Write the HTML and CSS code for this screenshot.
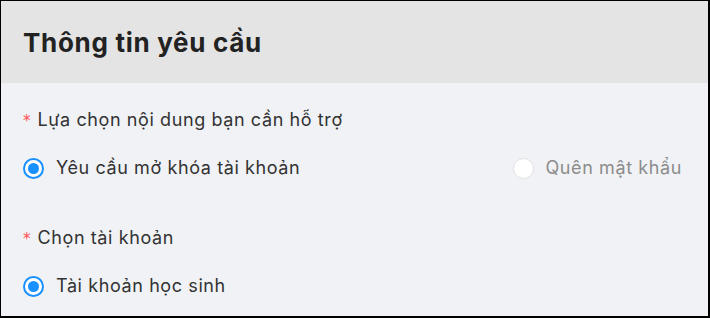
FILE: index.html
```html
<!DOCTYPE html>
<html lang="vi">
<head>
<meta charset="utf-8">
<link rel="stylesheet" href="styles.css">
</head>
<body>
<div class="frame">
  <div class="card-head">
    <h1 class="title">Thông tin yêu cầu</h1>
  </div>
  <div class="card-body">
    <div class="field">
      <div class="label"><span class="req">*</span>Lựa chọn nội dung bạn cần hỗ trợ</div>
      <div class="options split">
        <label class="radio checked"><span class="dot"></span><span class="rtext">Yêu cầu mở khóa tài khoản</span></label>
        <label class="radio disabled"><span class="dot"></span><span class="rtext">Quên mật khẩu</span></label>
      </div>
    </div>
    <div class="field">
      <div class="label"><span class="req">*</span>Chọn tài khoản</div>
      <div class="options">
        <label class="radio checked"><span class="dot"></span><span class="rtext">Tài khoản học sinh</span></label>
      </div>
    </div>
  </div>
</div>
</body>
</html>
```
FILE: styles.css
```css
* { box-sizing: border-box; }
html, body { margin: 0; padding: 0; }
body {
  width: 710px;
  height: 318px;
  overflow: hidden;
  font-family: Inter, "Noto Sans", sans-serif;
  background: #000;
}
.frame {
  width: 710px;
  height: 318px;
  border-style: solid;
  border-color: #000;
  border-width: 1px 2px 2px 1px;
  background: #f0f2f5;
  display: flex;
  flex-direction: column;
}
.card-head {
  height: 82px;
  background: #e4e4e4;
  display: flex;
  align-items: center;
  padding: 0 22px;
}
.title {
  margin: 0;
  font-size: 26px;
  font-weight: 700;
  color: #222;
  letter-spacing: 0.7px;
}
.card-body {
  padding: 24px 26px 0 22px;
  display: flex;
  flex-direction: column;
  gap: 43px;
}
.field {
  display: flex;
  flex-direction: column;
  gap: 21px;
}
.label {
  font-size: 18px;
  letter-spacing: 0.6px;
  color: #333;
  line-height: 26px;
  display: flex;
  align-items: center;
}
.req {
  color: #ff4d4f;
  font-family: "DejaVu Sans", sans-serif;
  font-size: 15px;
  line-height: 1;
  margin-right: 7px;
  margin-top: 3px;
  letter-spacing: 0;
}
.options {
  display: flex;
  align-items: center;
}
.options.split { justify-content: space-between; }
.radio {
  display: flex;
  align-items: center;
  font-size: 18px;
  letter-spacing: 0.6px;
  line-height: 28px;
  color: #333;
}
.dot {
  width: 21px;
  height: 21px;
  border-radius: 50%;
  border: 1px solid #d9d9d9;
  background: #fff;
  margin-right: 12px;
  position: relative;
  flex: none;
}
.radio.checked .dot {
  border: 2px solid #1890ff;
}
.radio.checked .dot::after {
  content: "";
  position: absolute;
  left: 50%;
  top: 50%;
  width: 11px;
  height: 11px;
  margin: -5.5px 0 0 -5.5px;
  border-radius: 50%;
  background: #1890ff;
}
.radio.disabled .rtext { color: #8c8c8c; }
.radio.disabled .dot { border-color: #e0e0e0; }
```
